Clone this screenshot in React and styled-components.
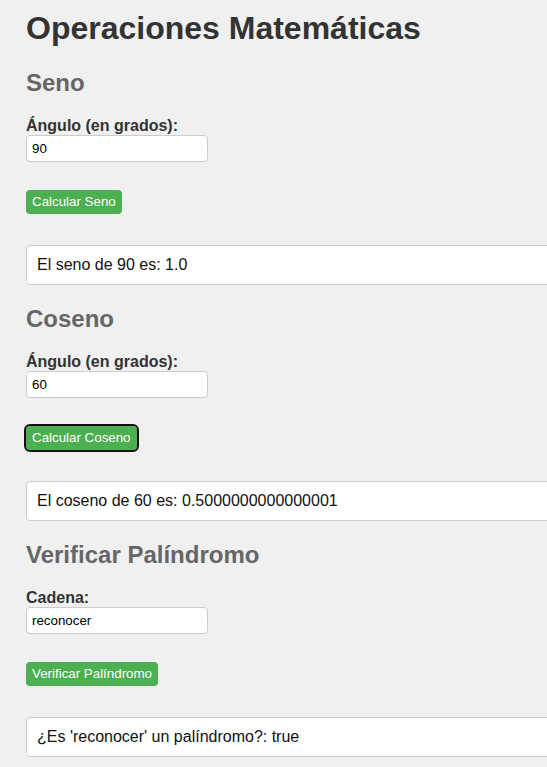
import styled, { createGlobalStyle } from "styled-components";

const GlobalStyle = createGlobalStyle`
  html, body {
    overflow: hidden;
  }
  body {
    margin: 0;
    font-family: "Liberation Sans", Arial, sans-serif;
    background-color: #f0f0f0;
  }
`;

function Section({ title, label, value, action, result, focused }) {
  return (
    <Block>
      <Heading2>{title}</Heading2>
      <Label>{label}</Label>
      <Input type="text" defaultValue={value} />
      <ButtonRow>
        <Button $focused={focused}>{action}</Button>
      </ButtonRow>
      <Result>{result}</Result>
    </Block>
  );
}

function App() {
  return (
    <Page>
      <GlobalStyle />
      <Heading1>Operaciones Matemáticas</Heading1>
      <Section
        title="Seno"
        label="Ángulo (en grados):"
        value="90"
        action="Calcular Seno"
        result="El seno de 90 es: 1.0"
      />
      <Section
        title="Coseno"
        label="Ángulo (en grados):"
        value="60"
        action="Calcular Coseno"
        result="El coseno de 60 es: 0.5000000000000001"
        focused
      />
      <Section
        title="Verificar Palíndromo"
        label="Cadena:"
        value="reconocer"
        action="Verificar Palíndromo"
        result="¿Es 'reconocer' un palíndromo?: true"
      />
    </Page>
  );
}

export default App;

const Page = styled.div`
  display: flex;
  flex-direction: column;

  padding: 10px 0 0 26px;
`;
const Heading1 = styled.h1`
  font-size: 32px;
  line-height: 37px;
  color: #333333;

  margin: 0 0 22px;
`;
const Block = styled.div`
  display: flex;
  flex-direction: column;
  align-items: flex-start;

  margin-bottom: 20px;
`;
const Heading2 = styled.h2`
  font-size: 24px;
  line-height: 28px;
  color: #666666;

  margin: 0 0 20px;
`;
const Label = styled.label`
  display: block;

  font-size: 16px;
  font-weight: bold;
  line-height: 18px;
  color: #333333;
`;
const Input = styled.input`
  box-sizing: border-box;
  width: 182px;
  height: 27px;

  padding: 5px;

  font-family: "Liberation Sans", Arial, sans-serif;
  font-size: 13.33px;
  color: #000000;

  background-color: #ffffff;
  border: 1px solid #cccccc;
  border-radius: 4px;
  outline: none;
`;
const ButtonRow = styled.div`
  margin-top: 28px;
`;
const Button = styled.button`
  display: block;

  padding: 4px 6px;

  font-family: "Liberation Sans", Arial, sans-serif;
  font-size: 13.33px;
  line-height: 16px;
  color: #ffffff;

  background-color: #4caf50;
  border: none;
  border-radius: 4px;

  outline: ${(p) => (p.$focused ? "2px solid #111111" : "none")};
  outline-offset: 0;

  cursor: pointer;
`;
const Result = styled.div`
  box-sizing: border-box;
  width: 600px;

  margin-top: 31px;
  padding: 10px;

  font-size: 16px;
  line-height: 18px;
  color: #111111;

  background-color: #ffffff;
  border: 1px solid #cccccc;
  border-radius: 4px;
`;
